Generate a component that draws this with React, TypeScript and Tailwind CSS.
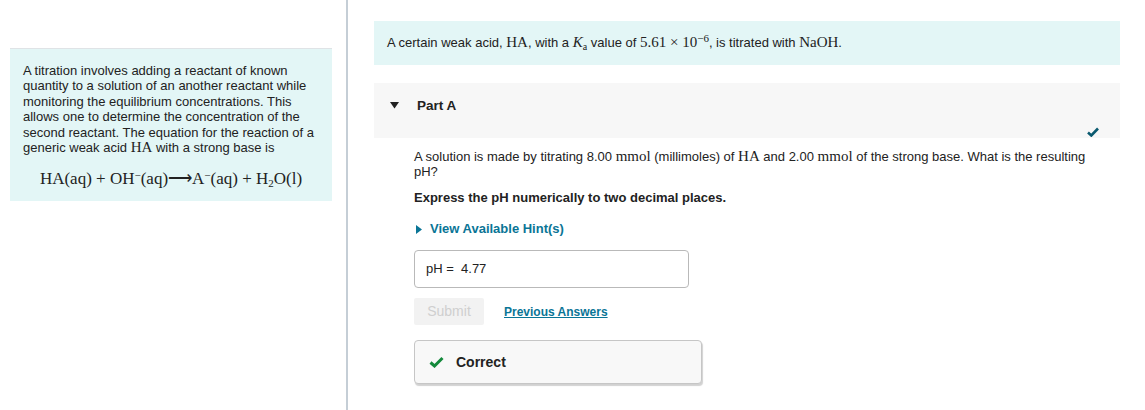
import React from "react";

const sans = { fontFamily: '"Liberation Sans", Arial, sans-serif' };

function M({ children }: { children: React.ReactNode }) {
  return (
    <span className="font-['Liberation_Serif',serif] text-[15px] leading-[1]">{children}</span>
  );
}

export default function App() {
  return (
    <div className="flex min-h-[410px] w-[1145px] bg-white text-[#222]" style={sans}>
      {/* Left column */}
      <div className="w-[348px] shrink-0 border-r-2 border-[#c5ced6] pl-[10px] pr-[14px] pt-[48px]">
        <div className="border-t border-[#dfe3e6] bg-[#e3f6f6] px-[13px] pb-[12px] pt-[14px]">
          <p className="text-[13px] leading-[15.4px] text-[#222]">
            A titration involves adding a reactant of known quantity to a solution of an another reactant while
            monitoring the equilibrium concentrations. This allows one to determine the concentration of the second
            reactant. The equation for the reaction of a generic weak acid <M>HA</M> with a strong base is
          </p>
          <p className="mt-[14px] text-center font-['Liberation_Serif',serif] text-[17px] leading-[20px] text-[#222]">
            HA(aq) + OH<sup className="text-[11px]">−</sup>(aq)⟶A<sup className="text-[11px]">−</sup>(aq) + H
            <sub className="text-[11px]">2</sub>O(l)
          </p>
        </div>
      </div>

      {/* Right column */}
      <div className="flex-1 pl-[26px] pr-[25px] pt-[21px]">
        <div className="flex h-[44px] items-center bg-[#e3f6f6] px-[13px] text-[13px]">
          <span>
            A certain weak acid, <M>HA</M>, with a <M><i>K</i><sub className="text-[10px]">a</sub></M> value of{" "}
            <M>
              5.61 × 10<sup className="text-[11px]">−6</sup>
            </M>
            , is titrated with <M>NaOH</M>.
          </span>
        </div>

        <div className="relative mt-[18px] flex h-[55px] items-start bg-[#f7f7f7] pl-[16px] pt-[15px]">
          <svg width="9" height="7" viewBox="0 0 9 7" className="mt-[4px]">
            <path d="M0 0 H9 L4.5 6.5 Z" fill="#222" />
          </svg>
          <span className="ml-[18px] text-[13.5px] font-bold leading-[16px]">Part A</span>
          <svg
            width="12"
            height="10"
            viewBox="0 0 12 10"
            className="absolute bottom-[1px] right-[21px]"
          >
            <path d="M1 5.5 L4.3 8.5 L11 1.5" stroke="#0b5a70" strokeWidth="2.6" fill="none" />
          </svg>
        </div>

        <div className="pl-[40px] pr-[26px] pt-[11px]">
          <p className="text-[13px] leading-[15px]">
            A solution is made by titrating 8.00 <M>mmol</M> (millimoles) of <M>HA</M> and 2.00 <M>mmol</M> of the
            strong base. What is the resulting pH?
          </p>
          <p className="mt-[11px] text-[13px] font-bold leading-[15px]">
            Express the pH numerically to two decimal places.
          </p>
          <div className="mt-[16px] flex items-center text-[13px] font-bold leading-[16px] text-[#0a7596]">
            <svg width="6" height="9" viewBox="0 0 6 9" className="ml-[2px]">
              <path d="M0 0 L6 4.5 L0 9 Z" fill="#0a7596" />
            </svg>
            <span className="ml-[8px]">View Available Hint(s)</span>
          </div>

          <div className="mt-[13px] flex h-[38px] w-[275px] items-center rounded-[4px] border border-[#b9b9b9] px-[11px] text-[13px]">
            pH = &nbsp;4.77
          </div>

          <div className="mt-[10px] flex items-center">
            <div className="flex h-[27px] w-[70px] items-center justify-center rounded-[2px] bg-[#f2f2f2] text-[14px] text-[#cfcfcf]">
              Submit
            </div>
            <span className="ml-[20px] text-[12px] font-bold text-[#0a7596] underline">Previous Answers</span>
          </div>

          <div className="mt-[15px] flex h-[44px] w-[288px] items-center rounded-[4px] border border-[#c6c6c6] bg-[#f8f8f8] pl-[14px] shadow-[1px_2px_1px_rgba(0,0,0,0.18)]">
            <svg width="15" height="12" viewBox="0 0 15 12">
              <path d="M1.5 6.5 L5.5 10 L13.5 2" stroke="#13893b" strokeWidth="3" fill="none" />
            </svg>
            <span className="ml-[12px] text-[14px] font-bold">Correct</span>
          </div>
        </div>
      </div>
    </div>
  );
}
